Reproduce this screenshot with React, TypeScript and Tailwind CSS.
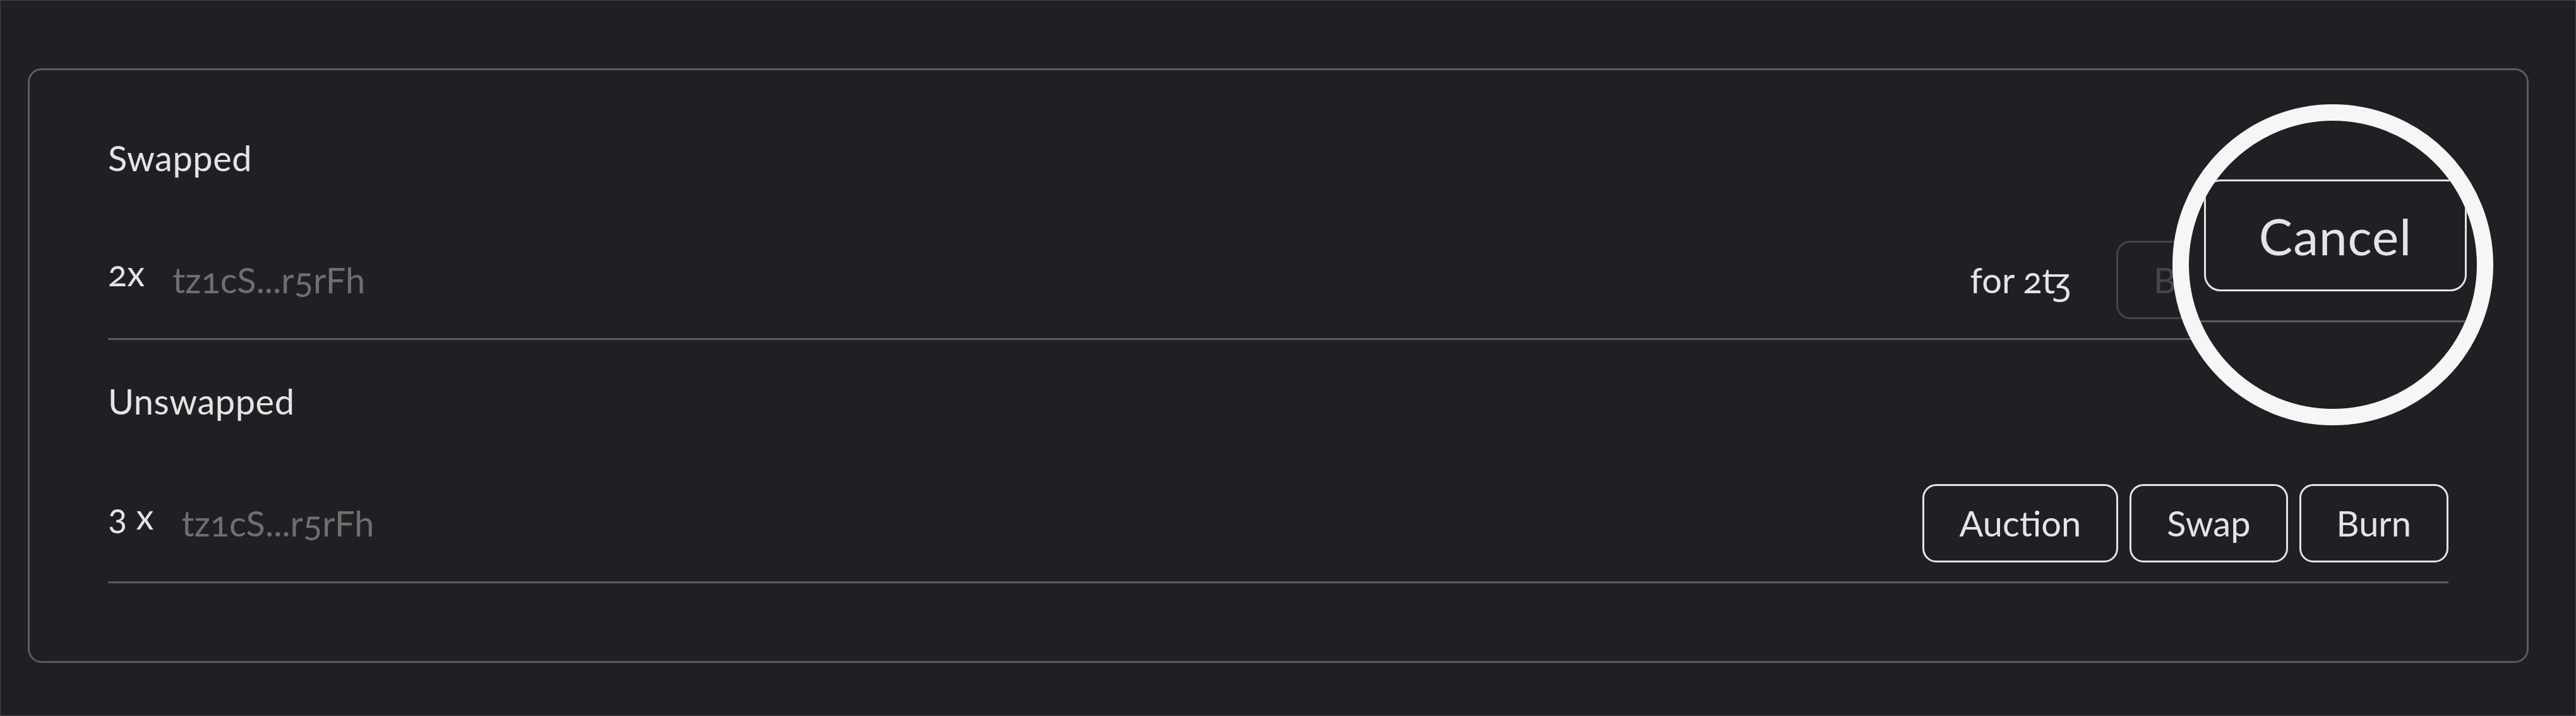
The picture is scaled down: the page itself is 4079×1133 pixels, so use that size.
import React from "react";

type Item = {
  amount: string;
  address: string;
  price?: string;
};

const swapped: Item = { amount: "2x", address: "tz1cS...r5rFh", price: "for 2ꜩ" };
const unswapped: Item = { amount: "3 x", address: "tz1cS...r5rFh" };

const OutlineButton = ({
  label,
  disabled,
  hidden,
}: {
  label: string;
  disabled?: boolean;
  hidden?: boolean;
}) => (
  <button
    disabled={disabled}
    className={
      hidden
        ? "invisible flex h-[124px] items-center rounded-[22px] border-[3px] border-[#e4e4e4] bg-transparent px-[50px] text-[#e4e4e4]"
        : disabled
          ? "flex h-[124px] items-center rounded-[22px] border-[3px] border-[#45464a] bg-transparent px-[56px] text-[#45464a]"
          : "flex h-[124px] items-center rounded-[22px] border-[3px] border-[#e4e4e4] bg-transparent px-[56px] text-[#e4e4e4]"
    }
  >
    {label}
  </button>
);

const Section = ({
  title,
  item,
  first,
  children,
}: {
  title: string;
  item: Item;
  first?: boolean;
  children: React.ReactNode;
}) => (
  <div className={first ? "" : "mt-[69px]"}>
    <div className="h-[56px] leading-[56px] tracking-[0.5px]">{title}</div>
    <div className="mt-[103px] flex h-[157px] items-start justify-between border-b-[3px] border-[#5c5c5c]">
      <div className="flex h-[124px] items-center">
        <span className="-translate-y-[11px] oldstyle-nums">{item.amount}</span>
        <span className="ml-[44px] text-[#6f6f6f] oldstyle-nums">{item.address}</span>
      </div>
      <div className="flex h-[124px] items-center gap-[18px]">
        {item.price && <span className="mr-[54px] oldstyle-nums">{item.price}</span>}
        {children}
      </div>
    </div>
  </div>
);

export default function App() {
  return (
    <div className="relative h-[1133px] w-[4079px] border border-[#45464a] bg-[#1f2024] pl-[43px] pr-[74px] pt-[107px] font-['Lato','Noto_Sans','DejaVu_Sans',sans-serif] text-[56px] text-[#e4e4e4]">
      <div className="h-[941px] rounded-[22px] border-[3px] border-[#5c5c5c] px-[124px] pt-[111px]">
        <Section title="Swapped" item={swapped} first>
          <OutlineButton label="Burn" disabled />
          <OutlineButton label="Cancel" hidden />
        </Section>
        <Section title="Unswapped" item={unswapped}>
          <OutlineButton label="Auction" />
          <OutlineButton label="Swap" />
          <OutlineButton label="Burn" />
        </Section>
      </div>

      {/* magnifier callout over the cancel button */}
      <div className="absolute left-[3439px] top-[164px] h-[508px] w-[508px] overflow-hidden rounded-full border-[26px] border-[#f5f7f6] bg-[#1f2024]">
        <div className="absolute left-0 top-[316px] h-[3px] w-[440px] bg-[#5c5c5c]" />
        <div className="absolute left-[24px] top-[93px] flex h-[177px] w-[416px] items-center justify-center rounded-[26px] border-[3px] border-[#e4e4e4] text-[80px] tracking-[1px]">
          Cancel
        </div>
      </div>
    </div>
  );
}
